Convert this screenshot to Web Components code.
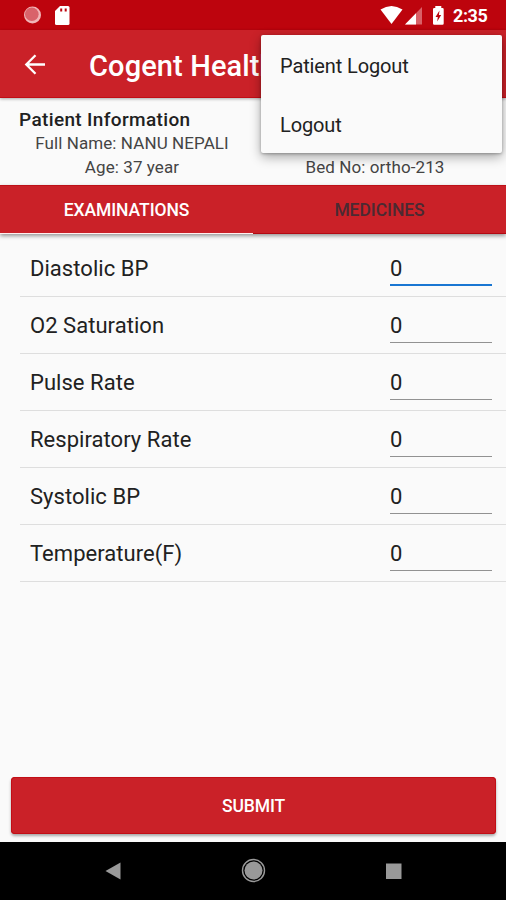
<!DOCTYPE html>
<html lang="en">
<head>
<meta charset="utf-8">
<title>Cogent Health</title>
<style>
html,body{margin:0;padding:0;background:#fafafa}
body{font-family:Roboto,"Liberation Sans",sans-serif;color:#212121}
</style>
</head>
<body>
<health-app></health-app>
<script>
const define=(name,html)=>{
  const t=document.createElement('template');t.innerHTML=html;
  customElements.define(name,class extends HTMLElement{
    constructor(){super();this.attachShadow({mode:'open'}).append(t.content.cloneNode(true));}
  });
};
define('status-bar',`<style>
:host{display:flex;height:30px;background:#bd040d;color:#fff}
svg{display:block;width:445px;height:30px;flex:none}
span{font-weight:700;font-size:18px;line-height:32px;margin-left:8px;letter-spacing:-.4px;white-space:nowrap}
</style>
<svg viewBox="0 0 445 30">
<circle cx="32.500" cy="15" r="8.500" fill="#f1b5b7"/><circle cx="31.800" cy="14.200" r="6.800" fill="#d9626a"/>
<path d="M60 6h8q1.500 0 1.500 1.500v16q0 1.500-1.500 1.500H56.500Q55 25 55 23.500V11z" fill="#fff"/>
<path d="M60.200 8.500h2v3h-2zM64.700 8.500h2v3h-2z" fill="#bd040d"/>
<path d="M380.500 9.500Q391.500 2.500 402.500 9.500L391.500 24z" fill="#fff"/>
<path d="M422 7v17.500h-17z" fill="#d96067"/><path d="M416 13.200v11.300h-11z" fill="#fff"/>
<path d="M435.300 6h6v2h1.200q1.200 0 1.200 1.200v14.300q0 1.200-1.200 1.200h-8.300q-1.200 0-1.200-1.200V9.200q0-1.200 1.200-1.200h1.100z" fill="#fff"/>
<path d="M439.500 10.500l-4 6.500h2.300l-.6 4.500 4-6.500h-2.300z" fill="#bd040d"/>
</svg><span>2:35</span>`);
define('app-bar',`<style>
:host{display:flex;height:68px;box-sizing:border-box;align-items:center;padding-left:23px;background:#ca2128;color:#fff;border-bottom:1px solid #c10d15;box-shadow:0 1px 3px #0005;position:relative}
svg{width:24px;height:24px;flex:none}
h1{margin:4px 0 0 42px;font-size:29px;font-weight:500;line-height:36px;white-space:nowrap;letter-spacing:.12px}
</style>
<svg viewBox="0 0 24 24" fill="none" stroke="#fff" stroke-width="2.300"><path d="M22 12.500H3.500M12.500 3.300L3.300 12.500l9.200 9.200"/></svg>
<h1><slot></slot></h1>`);
define('patient-info',`<style>
:host{display:block;height:87px;box-sizing:border-box;padding-top:9px;background:#fafafa}
h2{margin:0 0 0 19px;font-size:19px;line-height:25px;font-weight:500;letter-spacing:.36px}
.g{display:grid;grid-template-columns:264px 222px;font-size:17px;line-height:23.500px;letter-spacing:.09px;color:#444;text-align:center}
.g ::slotted(*){white-space:nowrap}
</style><h2>Patient Information</h2><div class="g"><slot></slot></div>`);
define('tab-bar',`<style>
:host{display:flex;height:49px;background:#ca2128;box-shadow:0 2px 4px #0006;position:relative;box-sizing:border-box;border-top:1px solid #bd1118}
div{flex:1;text-align:center;font-size:17.500px;line-height:49px;font-weight:500;letter-spacing:-.07px;box-sizing:border-box;color:#fff}
.on{border-bottom:1px solid #fff0f0}
.off{color:#4b2a32;border-bottom:1px solid #b30912}
</style><div class="on"><slot name="active"></slot></div><div class="off"><slot name="inactive"></slot></div>`);
define('vital-row',`<style>
:host{display:flex;height:57px;box-sizing:border-box;margin-left:20px;padding:0 14px 0 10px;border-bottom:1px solid #dedede;justify-content:space-between;font-size:22px;letter-spacing:.04px}
.l{line-height:57px;white-space:nowrap}
.v{width:102px;height:46px;box-sizing:border-box;line-height:57px;border-bottom:1px solid var(--line,#929292)}
:host([focused]) .v{--line:#1976d2;border-bottom-width:2px}
</style><span class="l"><slot></slot></span><span class="v">0</span>`);
define('submit-button',`<style>
:host{display:block;margin:0 10px 0 11px;height:57px;border-radius:4px;background:#ca2128;color:#fff;text-align:center;font-size:17.500px;line-height:59px;font-weight:500;letter-spacing:-.1px;box-shadow:0 2px 3px #0005,inset 0 0 0 1px #c20e16}
</style><slot></slot>`);
define('nav-bar',`<style>
:host{display:block;height:58px;background:#000}svg{display:block}
</style><svg width="506" height="58" viewBox="0 842 506 58"><path d="M120.500 862.500v17l-15-8.500z" fill="#999"/>
<circle cx="253.500" cy="870.500" r="11" fill="none" stroke="#999" stroke-width="1.400"/><circle cx="253.500" cy="870.500" r="9" fill="#999"/>
<path d="M386 863.500h15.500v15.500H386z" fill="#999"/></svg>`);
define('overflow-menu',`<style>
:host{display:flex;flex-direction:column;position:absolute;left:261px;top:35px;width:241px;height:118px;background:#fafafa;border-radius:2px;box-shadow:0 4px 12px #0005,0 1px 3px #0004;z-index:5}
::slotted(*){height:59px;line-height:62px;padding-left:19px;font-size:20px;letter-spacing:-.12px;color:#212121;white-space:nowrap}
</style><slot></slot>`);
define('health-app',`<style>
:host{display:flex;flex-direction:column;position:relative;width:506px;height:900px;overflow:hidden;background:#fafafa}
main{flex:1;padding-top:6px}
app-bar,tab-bar{z-index:1}nav-bar{margin-top:8px}
</style>
<status-bar></status-bar>
<app-bar>Cogent Health</app-bar>
<patient-info><span>Full Name: NANU NEPALI</span><span></span><span>Age: 37 year</span><span>Bed No: ortho-213</span></patient-info>
<tab-bar><span slot="active">EXAMINATIONS</span><span slot="inactive">MEDICINES</span></tab-bar>
<main><vital-row focused>Diastolic BP</vital-row><vital-row>O2 Saturation</vital-row><vital-row>Pulse Rate</vital-row><vital-row>Respiratory Rate</vital-row><vital-row>Systolic BP</vital-row><vital-row>Temperature(F)</vital-row></main>
<submit-button>SUBMIT</submit-button>
<nav-bar></nav-bar>
<overflow-menu><div>Patient Logout</div><div>Logout</div></overflow-menu>`);
</script>
</body>
</html>
